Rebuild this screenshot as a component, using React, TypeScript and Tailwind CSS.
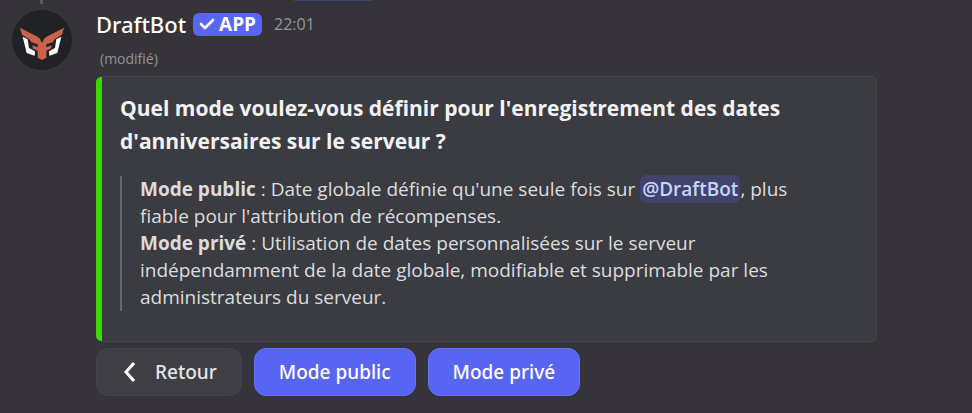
import type { ReactNode } from "react";

function LogoHalf() {
  return (
    <>
      <path fill="#c8634a" d="M24 53 L78 81 Q86 86 87 94 L90 98 L90 150 L77 143 L77 122 L62 115 L62 106 L77 112 L77 103 L58 97 L52 88 L30 74 Z" />
      <path fill="#fff" d="M32 80 L47 88 L51 114 L69 124 L68 137 L44 129 Z" />
    </>
  );
}

function DraftBotLogo() {
  return (
    <svg viewBox="0 0 180 180" className="size-[60px] shrink-0" role="img" aria-label="DraftBot">
      <circle cx="90" cy="90" r="90" fill="#202225" />
      <LogoHalf />
      <g transform="matrix(-1 0 0 1 180 0)">
        <LogoHalf />
      </g>
    </svg>
  );
}

function PrimaryButton({ children }: { children: ReactNode }) {
  return (
    <button
      type="button"
      className="h-12 rounded-xl border border-[#6672f3] bg-[#5865f2] px-6 font-['Noto_Sans',sans-serif] text-[19px] font-medium text-white"
    >
      {children}
    </button>
  );
}

export default function App() {
  return (
    <main className="relative min-h-screen bg-[#36343a] font-['Open_Sans',sans-serif] text-[#dcdcdf]">
      <div className="absolute top-0 left-10 h-1 w-[3px] bg-[#5b5a61]" />
      <div className="absolute top-0 left-[294px] h-px w-[78px] bg-[#40427a]" />
      <article className="flex gap-6 px-3 pt-2">
        <div className="pt-[2px]">
          <DraftBotLogo />
        </div>
        <div className="min-w-0 flex-1">
          <header className="flex h-8 items-center">
            <h1 className="font-['Noto_Sans',sans-serif] text-[22px] leading-[30px] font-medium text-white">DraftBot</h1>
            <span className="ml-[7px] flex h-[23px] items-center gap-1 rounded-md bg-[#5865f2] px-[6px] text-[19px] font-bold text-white">
              <svg viewBox="0 0 16 12" className="h-3 w-4" fill="none" aria-hidden="true">
                <path d="M2 6 L6 10 L14 2" stroke="#fff" strokeWidth="2.6" strokeLinecap="round" strokeLinejoin="round" />
              </svg>
              APP
            </span>
            <time className="ml-3 text-base text-[#94939b]">22:01</time>
          </header>
          <p className="h-9 pt-[7px] pl-1 text-[14px] leading-6 text-[#94939b]">(modifié)</p>
          <section className="max-w-[781px] rounded-md bg-[#3b3c41]">
            <div className="flex overflow-hidden rounded-md border border-l-0 border-[#46464c]">
              <div className="w-[6px] shrink-0 bg-[#3bd900]" />
              <div className="px-[18px] pt-[15px] pb-[30px]">
                <h2 className="text-[21px] leading-[33px] font-bold text-[#f2f2f4]">
                  Quel mode voulez-vous définir pour l'enregistrement des dates
                  <br />
                  d'anniversaires sur le serveur ?
                </h2>
                <blockquote className="mt-[18px] border-l-2 border-[#66666d] pl-[18px] text-[19px] leading-[27px]">
                  <strong className="font-bold">Mode public</strong> : Date globale définie qu'une seule fois sur{" "}
                  <a href="#draftbot" className="rounded-md bg-[#42436a] px-[2px] py-px font-semibold text-[#c9d3ff]">
                    @DraftBot
                  </a>
                  , plus
                  <br />
                  fiable pour l'attribution de récompenses.
                  <br />
                  <strong className="font-bold">Mode privé</strong> : Utilisation de dates personnalisées sur le serveur
                  <br />
                  indépendamment de la date globale, modifiable et supprimable par les
                  <br />
                  administrateurs du serveur.
                </blockquote>
              </div>
            </div>
          </section>
          <div className="mt-[6px] flex gap-3">
            <button
              type="button"
              className="flex h-12 items-center gap-[18px] rounded-xl border border-[#45444a] bg-[#403f45] px-6 font-['Noto_Sans',sans-serif] text-[19px] font-medium text-[#e4e4e7]"
            >
              <svg viewBox="0 0 16 20" className="h-5 w-4" fill="none" aria-hidden="true">
                <path d="M13 1 L5 10 L13 19" stroke="#fff" strokeWidth="3" />
              </svg>
              Retour
            </button>
            <PrimaryButton>Mode public</PrimaryButton>
            <PrimaryButton>Mode privé</PrimaryButton>
          </div>
        </div>
      </article>
    </main>
  );
}
